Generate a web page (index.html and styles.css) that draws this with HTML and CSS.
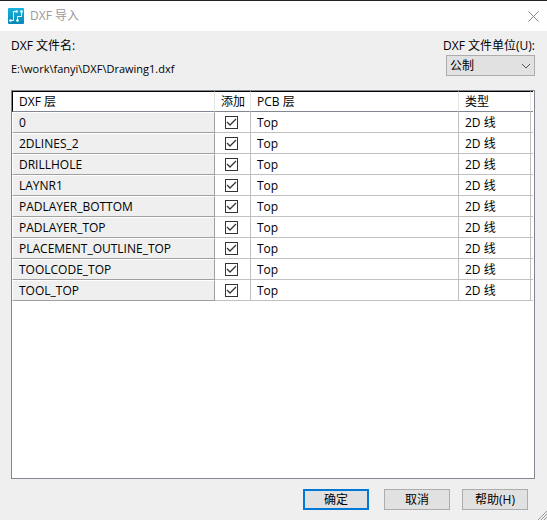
FILE: index.html
```html
<!DOCTYPE html>
<html lang="zh-CN">
<head>
    <meta charset="UTF-8">
    <title>DXF 导入</title>
    <link rel="stylesheet" href="styles.css">
</head>
<body>
    <form class="dialog">
        <header class="title-bar">
            <svg class="app-icon" width="16" height="16" viewBox="0 0 16 16">
                <defs>
                    <linearGradient id="iconFill" x1="0" y1="0" x2="0" y2="1">
                        <stop offset="0" stop-color="#17b4dc"/>
                        <stop offset="1" stop-color="#0787b8"/>
                    </linearGradient>
                </defs>
                <rect width="16" height="16" rx="1" fill="url(#iconFill)"/>
                <path d="M2 12.500H5.500V3.500H8M9.500 12.500V8.500H13.500V3.500" fill="none" stroke="#fff"/>
                <g fill="#fff">
                    <circle cx="2.500" cy="12.500" r="1.300"/>
                    <circle cx="8.500" cy="3.500" r="1.300"/>
                    <circle cx="9.500" cy="12.500" r="1.300"/>
                    <circle cx="13.500" cy="3.500" r="1.300"/>
                </g>
            </svg>
            <h1>DXF 导入</h1>
            <button type="button" class="close-button" aria-label="关闭">
                <svg width="11" height="11" viewBox="0 0 11 11">
                    <path d="M.5.5l10 10M10.500.5l-10 10" fill="none" stroke="#888"/>
                </svg>
            </button>
        </header>

        <main class="content">
            <div class="file-row">
                <div class="file-info">
                    <p>DXF 文件名:</p>
                    <p class="file-path">E:\work\fanyi\DXF\Drawing1.dxf</p>
                </div>
                <div class="unit-field">
                    <label for="unit">DXF 文件单位(U):</label>
                    <select id="unit" name="unit">
                        <option>公制</option>
                    </select>
                </div>
            </div>

            <div class="layer-list">
                <table>
                    <colgroup>
                        <col class="col-layer">
                        <col class="col-add">
                        <col class="col-pcb">
                        <col class="col-type">
                        <col class="col-end">
                    </colgroup>
                    <thead>
                        <tr><th>DXF 层</th><th>添加</th><th>PCB 层</th><th>类型</th><td></td></tr>
                    </thead>
                    <tbody>
                        <tr><th id="l1">0</th><td><input type="checkbox" aria-labelledby="l1" checked></td><td>Top</td><td>2D 线</td><td></td></tr>
                        <tr><th id="l2">2DLINES_2</th><td><input type="checkbox" aria-labelledby="l2" checked></td><td>Top</td><td>2D 线</td><td></td></tr>
                        <tr><th id="l3">DRILLHOLE</th><td><input type="checkbox" aria-labelledby="l3" checked></td><td>Top</td><td>2D 线</td><td></td></tr>
                        <tr><th id="l4">LAYNR1</th><td><input type="checkbox" aria-labelledby="l4" checked></td><td>Top</td><td>2D 线</td><td></td></tr>
                        <tr><th id="l5">PADLAYER_BOTTOM</th><td><input type="checkbox" aria-labelledby="l5" checked></td><td>Top</td><td>2D 线</td><td></td></tr>
                        <tr><th id="l6">PADLAYER_TOP</th><td><input type="checkbox" aria-labelledby="l6" checked></td><td>Top</td><td>2D 线</td><td></td></tr>
                        <tr><th id="l7">PLACEMENT_OUTLINE_TOP</th><td><input type="checkbox" aria-labelledby="l7" checked></td><td>Top</td><td>2D 线</td><td></td></tr>
                        <tr><th id="l8">TOOLCODE_TOP</th><td><input type="checkbox" aria-labelledby="l8" checked></td><td>Top</td><td>2D 线</td><td></td></tr>
                        <tr><th id="l9">TOOL_TOP</th><td><input type="checkbox" aria-labelledby="l9" checked></td><td>Top</td><td>2D 线</td><td></td></tr>
                    </tbody>
                </table>
            </div>
        </main>

        <footer class="actions">
            <button type="submit" class="btn btn-default">确定</button>
            <button type="button" class="btn">取消</button>
            <button type="button" class="btn">帮助(H)</button>
        </footer>

        <svg class="resize-grip" width="9" height="9" viewBox="0 0 9 9">
            <path d="M0 9L9 0M3 9L9 3M6 9L9 6" fill="none" stroke="#999"/>
        </svg>
    </form>
</body>
</html>
```
FILE: styles.css
```css
* {
    margin: 0;
    padding: 0;
    box-sizing: border-box;
}

body,
button,
select {
    font-family: "Open Sans", "Noto Sans CJK SC", sans-serif;
    font-size: 12px;
    line-height: 16px;
    color: #000;
}

.dialog {
    position: relative;
    display: flex;
    flex-direction: column;
    min-height: 100vh;
    background-color: #efefef;
    border-top: 1px solid #202024;
}

.title-bar {
    display: flex;
    align-items: center;
    gap: 6px;
    height: 30px;
    padding: 0 8px;
    background-color: #fff;
}

.title-bar h1 {
    flex: 1;
    font-size: 12px;
    font-weight: 400;
    color: #999;
}

.close-button {
    display: flex;
    border: none;
    background: none;
}

.content {
    flex: 1;
    display: flex;
    flex-direction: column;
    gap: 13px;
    padding: 7px 12px 0 11px;
}

.file-row {
    display: flex;
    justify-content: space-between;
}

.file-info {
    display: flex;
    flex-direction: column;
    gap: 7px;
}

.file-path {
    font-size: 11px;
}

.unit-field {
    display: flex;
    flex-direction: column;
    align-items: flex-end;
    gap: 1px;
}

.unit-field label {
    white-space: nowrap;
}

.unit-field select {
    appearance: none;
    width: 89px;
    height: 21px;
    padding: 0 3px;
    border: 1px solid #adadad;
    border-radius: 0;
    background: #e1e1e1 url("data:image/svg+xml,%3Csvg xmlns='http://www.w3.org/2000/svg' width='10' height='6'%3E%3Cpath d='M1 1l4 4 4-4' fill='none' stroke='%23555'/%3E%3C/svg%3E") no-repeat right 3px center;
}

.layer-list {
    flex: 1;
    padding-right: 1px;
    border: 1px solid #828790;
    background-color: #fff;
}

table {
    width: 100%;
    table-layout: fixed;
    border-collapse: separate;
    border-spacing: 0;
}

.col-layer {
    width: 203px;
}

.col-add {
    width: 36px;
}

.col-type {
    width: 72px;
}

.col-end {
    width: 2px;
}

th,
td {
    height: 21px;
    padding: 1px 6px 0;
    border-right: 1px solid #c0c0c0;
    border-bottom: 1px solid #c0c0c0;
    font-weight: 400;
    text-align: left;
    white-space: nowrap;
}

thead th,
thead td {
    border-top: 1px solid #000;
    border-right-color: #e5e5e5;
    border-bottom-color: #828790;
}

thead th:first-child {
    border-left: 1px solid #000;
}

tbody th {
    padding-top: 0;
    border: 1px solid #a0a0a0;
    border-top-color: #fff;
    border-left-color: #fff;
    background-color: #efefef;
}

th:last-child,
td:last-child {
    padding: 0;
    border-right: none;
}

input[type="checkbox"] {
    appearance: none;
    display: block;
    width: 13px;
    height: 13px;
    margin-left: 4px;
    border: 1px solid #333;
    background: #fff url("data:image/svg+xml,%3Csvg xmlns='http://www.w3.org/2000/svg' width='11' height='11'%3E%3Cpath d='M1 5l3 3 6-6' fill='none' stroke='%23333' stroke-width='1.300'/%3E%3C/svg%3E") no-repeat center;
}

.actions {
    display: flex;
    justify-content: flex-end;
    gap: 12px;
    padding: 10px 19px 10px;
}

.btn {
    width: 66px;
    height: 21px;
    border: 1px solid #adadad;
    background-color: #e1e1e1;
}

.btn-default {
    margin-right: 3px;
    border: 2px solid #0078d7;
}

.resize-grip {
    position: absolute;
    right: 0;
    bottom: 0;
}
```
